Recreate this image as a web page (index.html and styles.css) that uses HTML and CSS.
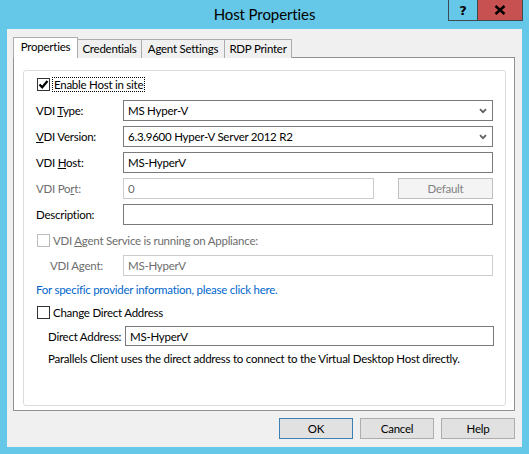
FILE: index.html
```html
<!DOCTYPE html>
<html>
<head>
<meta charset="utf-8">
<link rel="stylesheet" href="styles.css">
</head>
<body>
<div class="window">
  <div class="titlebar">
    <div></div>
    <div class="title">Host Properties</div>
    <div class="caption-btns">
      <div class="cbtn help">?</div>
      <div class="cbtn close">
        <svg width="12" height="10" viewBox="0 0 12 10"><path d="M1.5 1 L10.5 9 M10.5 1 L1.5 9" stroke="#000" stroke-width="2.4" fill="none"/></svg>
      </div>
    </div>
  </div>
  <div class="client">
    <div class="tabs">
      <div class="tab selected">Properties</div>
      <div class="tab t-cred">Credentials</div>
      <div class="tab t-agent">Agent Settings</div>
      <div class="tab t-rdp">RDP Printer</div>
    </div>
    <div class="panel">
      <div class="group">
        <div class="check-row r-enable">
          <span class="cbox checked">
            <svg width="11" height="11" viewBox="0 0 11 11"><path d="M1.5 5.5 L4.2 8.3 L9.5 2" stroke="#000" stroke-width="2.2" fill="none"/></svg>
          </span>
          <span class="focus">Enable Host in site</span>
        </div>
        <div class="field r-type">
          <span class="label">VDI <u>T</u>ype:</span>
          <div class="combo"><span>MS Hyper-V</span>
            <svg class="chev" width="8" height="6" viewBox="0 0 8 6"><path d="M1 1.2 L4 4.2 L7 1.2" stroke="#606060" stroke-width="1.8" fill="none"/></svg>
          </div>
        </div>
        <div class="field r-next">
          <span class="label"><u>V</u>DI Version:</span>
          <div class="combo"><span>6.3.9600 Hyper-V Server 2012 R2</span>
            <svg class="chev" width="8" height="6" viewBox="0 0 8 6"><path d="M1 1.2 L4 4.2 L7 1.2" stroke="#606060" stroke-width="1.8" fill="none"/></svg>
          </div>
        </div>
        <div class="field r-next">
          <span class="label">VDI <u>H</u>ost:</span>
          <div class="input">MS-HyperV</div>
        </div>
        <div class="field r-next port">
          <span class="label disabled">VDI Po<u>r</u>t:</span>
          <div class="port-wrap">
            <div class="input disabled">0</div>
            <div class="btn disabled-btn">Default</div>
          </div>
        </div>
        <div class="field r-next">
          <span class="label">Description:</span>
          <div class="input"></div>
        </div>
        <div class="check-row r-agent disabled">
          <span class="cbox dis"></span>
          <span>VDI <u>A</u>gent Service is running on Appliance:</span>
        </div>
        <div class="field r-agentin">
          <span class="label disabled sub">VDI Agent:</span>
          <div class="input disabled">MS-HyperV</div>
        </div>
        <div class="link-row">For specific provider information, please click here.</div>
        <div class="check-row r-change">
          <span class="cbox"></span>
          <span>Change Direct Address</span>
        </div>
        <div class="direct-row">
          <span class="dlabel">Direct Address:</span>
          <div class="input dinput">MS-HyperV</div>
        </div>
        <div class="note">Parallels Client uses the direct address to connect to the Virtual Desktop Host directly.</div>
      </div>
    </div>
    <div class="buttons">
      <div class="btn dlg default">OK</div>
      <div class="btn dlg">Cancel</div>
      <div class="btn dlg">Help</div>
    </div>
  </div>
</div>
</body>
</html>
```

FILE: styles.css
```css
* { box-sizing: border-box; }
html, body { margin: 0; padding: 0; }
body {
  width: 529px;
  height: 454px;
  background: #66c8e8;
  font-family: Lato, "Noto Sans", sans-serif;
  font-size: 11.5px;
  letter-spacing: -0.25px;
  color: #000;
  overflow: hidden;
}
.window {
  display: flex;
  flex-direction: column;
  width: 529px;
  height: 454px;
}
.titlebar {
  height: 29px;
  flex: none;
  display: grid;
  grid-template-columns: 1fr auto 1fr;
  align-items: start;
}
.title {
  font-size: 15px;
  letter-spacing: -0.1px;
  line-height: 29px;
  color: #000;
}
.caption-btns {
  justify-self: end;
  display: flex;
  margin-right: 6px;
}
.cbtn {
  height: 21px;
  border: 1px solid #3d4a52;
  border-top: none;
  display: flex;
  align-items: center;
  justify-content: center;
}
.help {
  width: 29px;
  border-right: none;
  background: #66c8e8;
  font-weight: bold;
  font-size: 13px;
  letter-spacing: 0;
  font-family: "DejaVu Sans", sans-serif;
}
.close {
  width: 46px;
  background: #c75050;
}
.client {
  margin: 0 7px 7px 7px;
  flex: 1;
  min-width: 0;
  background: #f0f0f0;
  padding: 8px 7px 0 6px;
  display: flex;
  flex-direction: column;
}
.tabs {
  display: flex;
  align-items: flex-end;
  height: 21px;
  margin-bottom: -1px;
  position: relative;
  z-index: 1;
}
.tab {
  height: 19px;
  border: 1px solid #acacac;
  border-bottom: none;
  background: #f0f0f0;
  line-height: 18px;
  text-align: center;
  margin-left: -1px;
  white-space: nowrap;
}
.tab.selected {
  height: 21px;
  width: 65px;
  margin-left: 0;
  background: #fff;
  border-color: #acacac;
  line-height: 17px;
  position: relative;
  z-index: 2;
}
.t-cred { width: 65px; }
.t-agent { width: 84px; }
.t-rdp { width: 68px; }
.panel {
  height: 354px;
  border: 1px solid #8f9193;
  background: #fff;
  padding: 12px 8px 4px 9px;
  display: flex;
  min-width: 0;
}
.group {
  flex: 1;
  min-width: 0;
  border: 1px solid #dcdcdc;
  border-radius: 3px;
  padding: 5px 12px 0 12px;
  display: flex;
  flex-direction: column;
}
.check-row {
  height: 16px;
  display: flex;
  align-items: center;
  gap: 3px;
  padding-left: 1px;
  white-space: nowrap;
}
.cbox {
  width: 13px;
  height: 13px;
  border: 1px solid #333;
  background: #fff;
  display: flex;
  align-items: center;
  justify-content: center;
  flex: none;
}
.cbox.dis { border-color: #bcbcbc; }
.focus {
  outline: 1px dotted #000;
  outline-offset: 0;
  padding: 0 1px;
  line-height: 13px;
}
.disabled { color: #6d6d6d; }
.check-row.disabled { color: #6d6d6d; }
.field {
  display: grid;
  grid-template-columns: 87px minmax(0, 1fr);
  align-items: center;
  height: 21px;
  white-space: nowrap;
}
.r-type { margin-top: 8px; }
.r-next { margin-top: 5px; }
.r-agent { margin-top: 7px; }
.r-agentin { margin-top: 7px; }
.label.sub { padding-left: 14px; }
.combo, .input {
  height: 21px;
  border: 1px solid #7a7a7a;
  background: #fff;
  display: flex;
  align-items: center;
  padding-left: 4px;
  white-space: nowrap;
  min-width: 0;
}
.combo { justify-content: space-between; padding-right: 5px; }
.input.disabled { border-color: #cccccc; color: #6d6d6d; }
.port-wrap {
  display: flex;
  justify-content: space-between;
  min-width: 0;
}
.port-wrap .input { width: 251px; }
.btn {
  display: flex;
  align-items: center;
  justify-content: center;
  border: 1px solid #adadad;
  background: #e1e1e1;
}
.disabled-btn {
  width: 95px;
  height: 21px;
  background: #f4f4f4;
  border-color: #bfbfbf;
  color: #838383;
}
.link-row {
  margin-top: 6px;
  height: 16px;
  line-height: 16px;
  color: #0066cc;
  white-space: nowrap;
}
.r-change { margin-top: 6px; }
.direct-row {
  margin-top: 6px;
  display: flex;
  align-items: center;
  padding-left: 12px;
  height: 20px;
  white-space: nowrap;
}
.dlabel { width: 77px; flex: none; }
.dinput { flex: 1; height: 20px; margin-right: -1px; }
.note {
  margin-top: 5px;
  padding-left: 12px;
  height: 16px;
  line-height: 16px;
  white-space: nowrap;
}
.buttons {
  display: flex;
  justify-content: flex-end;
  gap: 7px;
  margin-top: 7px;
  padding-right: 0;
}
.btn.dlg {
  width: 74px;
  height: 21px;
}
.btn.default { border-color: #3c7fb1; }
u { text-decoration: underline; text-underline-offset: 1px; }
```
